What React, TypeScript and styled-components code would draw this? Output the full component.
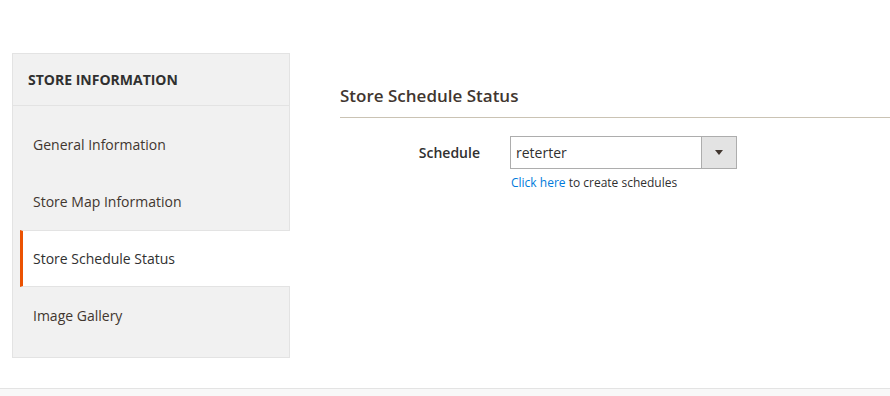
import styled, { createGlobalStyle } from 'styled-components';

const GlobalStyle = createGlobalStyle`
  html, body {
    margin: 0;
    padding: 0;
    background: #ffffff;
    font-family: 'Open Sans', 'Liberation Sans', sans-serif;
    color: #303030;
  }
`;

const Page = styled.div`
  width: 890px;
  padding-top: 53px;
`;

const Columns = styled.div`
  display: flex;
  align-items: flex-start;
`;

const Nav = styled.nav`
  width: 276px;
  margin-left: 12px;
  background: #f1f1f1;
  border: 1px solid #e3e3e3;
`;

const NavTitle = styled.div`
  height: 52px;
  box-sizing: border-box;
  border-bottom: 1px solid #e3e3e3;
  padding-left: 15px;
  display: flex;
  align-items: center;
  font-size: 14px;
  font-weight: 700;
  color: #303030;
  text-transform: uppercase;
`;

const NavList = styled.ul`
  list-style: none;
  margin: 0;
  padding: 10px 0 13px;
`;

const NavItem = styled.li<{ $active?: boolean }>`
  height: 57px;
  box-sizing: border-box;
  margin-left: 7px;
  margin-right: ${({ $active }) => ($active ? '-1px' : '0')};
  padding-left: 10px;
  display: flex;
  align-items: center;
  font-size: 14px;
  color: ${({ $active }) => ($active ? '#303030' : '#41362f')};
  background: ${({ $active }) => ($active ? '#ffffff' : 'transparent')};
  border-left: 3px solid ${({ $active }) => ($active ? '#eb5202' : 'transparent')};
  border-top: 1px solid ${({ $active }) => ($active ? '#e3e3e3' : 'transparent')};
  border-bottom: 1px solid ${({ $active }) => ($active ? '#e3e3e3' : 'transparent')};
`;

const Main = styled.main`
  flex: 1;
  margin-left: 50px;
  padding-top: 33px;
`;

const SectionTitle = styled.h2`
  margin: 0;
  font-size: 17px;
  font-weight: 600;
  line-height: 20px;
  color: #41362f;
  padding-bottom: 11px;
  border-bottom: 1px solid #cac3b4;
`;

const FieldRow = styled.div`
  display: grid;
  grid-template-columns: 140px 227px;
  column-gap: 30px;
  margin-top: 18px;
`;

const Label = styled.label`
  justify-self: end;
  align-self: start;
  line-height: 33px;
  font-size: 14px;
  font-weight: 600;
  color: #303030;
`;

const SelectBox = styled.div`
  display: flex;
  height: 33px;
  box-sizing: border-box;
  border: 1px solid #adadad;
  background: #ffffff;
`;

const SelectValue = styled.span`
  flex: 1;
  padding-left: 5px;
  line-height: 31px;
  font-size: 14px;
  color: #303030;
`;

const SelectButton = styled.span`
  width: 34px;
  border-left: 1px solid #adadad;
  background: #e3e3e3;
  display: flex;
  align-items: center;
  justify-content: center;
`;

const Arrow = styled.span`
  width: 0;
  height: 0;
  border-left: 4px solid transparent;
  border-right: 4px solid transparent;
  border-top: 5px solid #41362f;
`;

const Note = styled.div`
  grid-column: 2;
  margin-top: 5px;
  padding-left: 1px;
  font-size: 12px;
  color: #303030;
`;

const Link = styled.a`
  color: #007bdb;
  text-decoration: none;
`;

const Footer = styled.footer`
  margin-top: 30px;
  height: 20px;
  border-top: 1px solid #e3e3e3;
  background: #f8f8f8;
`;

const NAV_ITEMS = [
  'General Information',
  'Store Map Information',
  'Store Schedule Status',
  'Image Gallery',
];

export default function App() {
  return (
    <Page>
      <GlobalStyle />
      <Columns>
        <Nav>
          <NavTitle>Store Information</NavTitle>
          <NavList>
            {NAV_ITEMS.map((item) => (
              <NavItem key={item} $active={item === 'Store Schedule Status'}>
                {item}
              </NavItem>
            ))}
          </NavList>
        </Nav>
        <Main>
          <SectionTitle>Store Schedule Status</SectionTitle>
          <FieldRow>
            <Label>Schedule</Label>
            <SelectBox>
              <SelectValue>reterter</SelectValue>
              <SelectButton>
                <Arrow />
              </SelectButton>
            </SelectBox>
            <Note>
              <Link href="#">Click here</Link> to create schedules
            </Note>
          </FieldRow>
        </Main>
      </Columns>
      <Footer />
    </Page>
  );
}
